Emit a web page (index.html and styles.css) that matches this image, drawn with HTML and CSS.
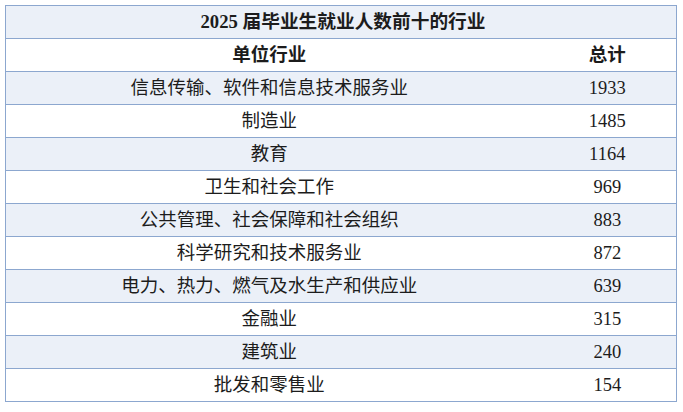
FILE: index.html
```html
<!DOCTYPE html>
<html lang="zh">
<head>
<meta charset="utf-8">
<link rel="stylesheet" href="styles.css">
</head>
<body>
<table class="tbl">
  <colgroup><col class="col1"><col class="col2"></colgroup>
  <tr class="title shaded"><td colspan="2"><span class="num">2025</span> 届毕业生就业人数前十的行业</td></tr>
  <tr class="head"><td>单位行业</td><td class="c2">总计</td></tr>
  <tr class="shaded"><td>信息传输、软件和信息技术服务业</td><td class="c2 num">1933</td></tr>
  <tr><td>制造业</td><td class="c2 num">1485</td></tr>
  <tr class="shaded"><td>教育</td><td class="c2 num">1164</td></tr>
  <tr><td>卫生和社会工作</td><td class="c2 num">969</td></tr>
  <tr class="shaded"><td>公共管理、社会保障和社会组织</td><td class="c2 num">883</td></tr>
  <tr><td>科学研究和技术服务业</td><td class="c2 num">872</td></tr>
  <tr class="shaded"><td>电力、热力、燃气及水生产和供应业</td><td class="c2 num">639</td></tr>
  <tr><td>金融业</td><td class="c2 num">315</td></tr>
  <tr class="shaded"><td>建筑业</td><td class="c2 num">240</td></tr>
  <tr><td>批发和零售业</td><td class="c2 num">154</td></tr>
</table>
</body>
</html>
```

FILE: styles.css
```css
html, body {
  margin: 0;
  padding: 0;
  background: #ffffff;
}
body {
  padding: 5px 0 0 5px;
  font-family: "Liberation Serif", "Noto Sans CJK SC", serif;
  color: #1c1c1c;
}
.tbl {
  border-collapse: collapse;
  width: 671px;
  table-layout: fixed;
  border-left: 1px solid #8ca7cf;
  border-right: 1px solid #8ca7cf;
}
.col1 {
  width: 527px;
}
.col2 {
  width: 144px;
}
.tbl td {
  border-top: 1px solid #8ca7cf;
  border-bottom: 1px solid #8ca7cf;
  height: 32px;
  padding: 0;
  text-align: center;
  vertical-align: middle;
  font-size: 18.5px;
  line-height: 20px;
}
.tbl .c2 {
  padding-left: 6px;
}
.shaded td {
  background: #ebf0f8;
}
.title td {
  font-weight: bold;
  font-size: 18.7px;
  padding-left: 4px;
}
.head td {
  font-weight: bold;
}
.num {
  font-family: "Liberation Serif", serif;
}
```
